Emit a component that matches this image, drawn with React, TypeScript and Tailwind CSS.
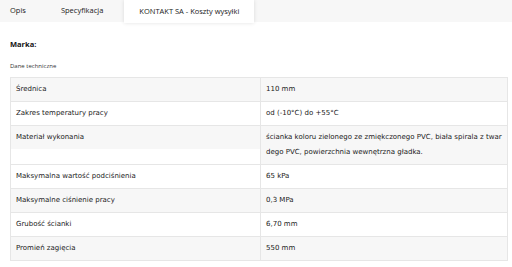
const rows = [
  { label: "Średnica", value: "110 mm" },
  { label: "Zakres temperatury pracy", value: "od (-10°C) do +55°C" },
  {
    label: "Materiał wykonania",
    value:
      "ścianka koloru zielonego ze zmiękczonego PVC, biała spirala z twardego PVC, powierzchnia wewnętrzna gładka.",
    tall: true,
  },
  { label: "Maksymalna wartość podciśnienia", value: "65 kPa" },
  { label: "Maksymalne ciśnienie pracy", value: "0,3 MPa" },
  { label: "Grubość ścianki", value: "6,70 mm" },
  { label: "Promień zagięcia", value: "550 mm" },
];

export default function App() {
  return (
    <div className="w-[512px] h-[267px] overflow-hidden bg-white">
      {/* TABS */}
      <div className="flex h-[22px] bg-[#f7f7f7] font-['Open_Sans',sans-serif] text-[7.5px] text-[#222]">
        <div className="pl-[10px] pr-[17px] flex items-center">Opis</div>
        <div className="pl-[18px] pr-[21px] flex items-center">Specyfikacja</div>
        <div className="w-[130px] h-[23px] flex items-center justify-center bg-white shadow-[0_0_4px_rgba(0,0,0,0.12)] z-10">
          KONTAKT SA - Koszty wysyłki
        </div>
      </div>

      <div className="px-[10px] font-['Open_Sans',sans-serif]">
        <div className="mt-[17px] text-[7.5px] font-bold text-[#111]">Marka:</div>
        <div className="mt-[12px] text-[6px] text-[#333]">Dane techniczne</div>

        {/* TABLE */}
        <div className="mt-[6px] w-[498px] border border-[#e6e6e6] font-['DejaVu_Sans',sans-serif] text-[7px] text-[#1a1a1a] leading-[15px]">
          {rows.map((r, i) => {
            const gray = i % 2 === 0;
            return (
              <div
                key={r.label}
                className={`flex border-b border-[#e6e6e6] last:border-b-0 ${
                  gray ? "bg-[#f7f7f7]" : "bg-white"
                }`}
              >
                <div className="w-[250px] shrink-0 flex flex-col border-r border-[#e6e6e6]">
                  <div className="px-[5px] py-[4px]">{r.label}</div>
                  {r.tall && <div className="flex-1 bg-white" />}
                </div>
                <div className="flex-1 px-[5px] py-[4px] break-all">{r.value}</div>
              </div>
            );
          })}
        </div>
      </div>
    </div>
  );
}
